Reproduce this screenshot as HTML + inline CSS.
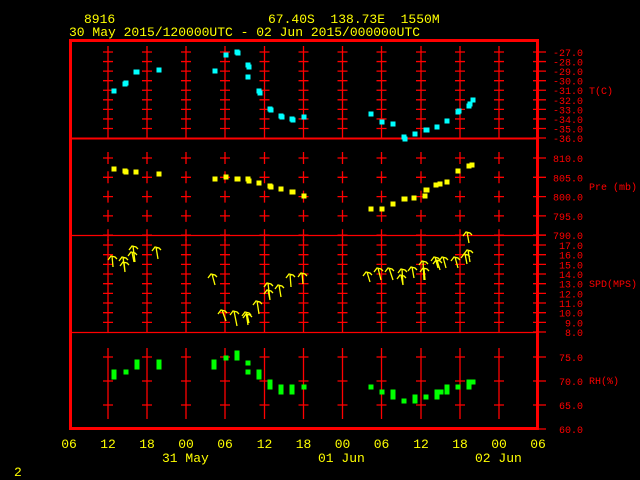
<!DOCTYPE html>
<html><head><meta charset="utf-8"><style>
html,body{margin:0;padding:0;background:#000;width:640px;height:480px;overflow:hidden}
svg{display:block}
</style></head><body>
<svg width="640" height="480" viewBox="0 0 640 480" xmlns="http://www.w3.org/2000/svg" font-family="Liberation Mono, monospace">
<rect width="640" height="480" fill="#000"/>
<!-- header -->
<g fill="#ffff00" font-size="13">
<text x="84" y="23">8916</text>
<text x="268" y="23" xml:space="preserve">67.40S  138.73E  1550M</text>
<text x="69" y="36">30 May 2015/120000UTC - 02 Jun 2015/000000UTC</text>
<text x="14" y="476">2</text>
</g>
<!-- grid -->
<g stroke="#ff0000" stroke-width="1.3" fill="none">
<line x1="71" y1="138.5" x2="538" y2="138.5" stroke-width="2"/>
<line x1="71" y1="235.5" x2="538" y2="235.5"/>
<line x1="71" y1="332.5" x2="538" y2="332.5"/>
<path id="g" d="
M108 46V138 M147 46V138 M186 46V138 M225 46V138 M264.5 46V138 M303.5 46V138 M342.5 46V138 M381.5 46V138 M421 46V138 M460 46V138 M499 46V138
M108 239V332 M147 239V332 M186 239V332 M225 239V332 M264.5 239V332 M303.5 239V332 M342.5 239V332 M381.5 239V332 M421 239V332 M460 239V332 M499 239V332
M108 348V419 M147 348V419 M186 348V419 M225 348V419 M264.5 348V419 M303.5 348V419 M342.5 348V419 M381.5 348V419 M421 348V419 M460 348V419 M499 348V419
"/>
</g>
<g id="crosses" stroke="#ff0000" stroke-width="1.3"></g>
<!-- frame -->
<rect x="70.5" y="40.5" width="467" height="388" fill="none" stroke="#ff0000" stroke-width="3"/>
<g id="rlabels" fill="#ff0000" font-size="10" text-anchor="end"></g>
<g fill="#ff0000" font-size="10">
<text x="589" y="94">T(C)</text>
<text x="589" y="190" xml:space="preserve">Pre (mb)</text>
<text x="589" y="287">SPD(MPS)</text>
<text x="589" y="384">RH(%)</text>
</g>
<!-- x labels -->
<g fill="#ffff00" font-size="13" text-anchor="middle">
<text x="69" y="448">06</text><text x="108" y="448">12</text><text x="147" y="448">18</text><text x="186" y="448">00</text>
<text x="225" y="448">06</text><text x="264.5" y="448">12</text><text x="303.5" y="448">18</text><text x="342.5" y="448">00</text>
<text x="381.5" y="448">06</text><text x="421" y="448">12</text><text x="460" y="448">18</text><text x="499" y="448">00</text><text x="538" y="448">06</text>
</g>
<g fill="#ffff00" font-size="13">
<text x="162" y="462">31 May</text><text x="318" y="462">01 Jun</text><text x="475" y="462">02 Jun</text>
</g>
<g id="data"></g>
</svg>
<script>
var NS="http://www.w3.org/2000/svg";
var xs=[108,147,186,225,264.5,303.5,342.5,381.5,421,460,499];
var cr=document.getElementById('crosses'),d="";
function ticks(ys,extraSeg){ys.forEach(function(y){xs.forEach(function(x){d+="M"+(x-5)+" "+y+"H"+(x+5);if(extraSeg)d+="M"+x+" "+(y-6)+"V"+(y+6);});d+="M533 "+y+"H546";});}
var tY=[],pY=[],sY=[],rY=[];
for(var i=0;i<10;i++)tY.push(52+i*9.56);
for(i=0;i<5;i++)pY.push(158+i*19.3);
for(i=0;i<10;i++)sY.push(245+i*9.67);
for(i=0;i<4;i++)rY.push(357+i*24);
ticks(tY.slice(0,9));ticks(pY,true);ticks(sY.slice(0,9));ticks(rY.slice(0,3));
d+="M533 138H546M533 235H546M533 332H546M533 429H546";
var p=document.createElementNS(NS,'path');p.setAttribute('d',d);p.setAttribute('fill','none');cr.appendChild(p);
// remove pressure continuous (none drawn) - pressure uses segments
var rl=document.getElementById('rlabels');
function lab(y,t){var e=document.createElementNS(NS,'text');e.setAttribute('x',583);e.setAttribute('y',y+4);e.textContent=t;rl.appendChild(e);}
for(i=0;i<10;i++)lab(tY[i],(-27-i)+".0");
for(i=0;i<5;i++)lab(pY[i],(810-5*i)+".0");
for(i=1;i<10;i++)lab(sY[i],(17-i)+".0");
lab(245,"17.0");
for(i=0;i<4;i++)lab(rY[i],(75-5*i)+".0");
var g=document.getElementById('data');
function sq(pts,c){pts.forEach(function(q){var r=document.createElementNS(NS,'rect');r.setAttribute('x',q[0]-2.5);r.setAttribute('y',q[1]-2.5);r.setAttribute('width',5);r.setAttribute('height',5);r.setAttribute('fill',c);g.appendChild(r);});}
sq([[114,91],[125,84],[126,83],[136,72],[137,72],[159,70],[215,71],[226,55],[237,52],[238,53],[248,65],[249,67],[248,77],[259,91],[260,93],[270,109],[271,110],[281,116],[282,117],[292,119],[293,120],[304,117],
[371,114],[382,122],[393,124],[404,137],[405,139],[415,134],[426,130],[427,130],[437,127],[447,121],[458,112],[459,111],[469,106],[470,104],[473,100]],"#00ffff");
sq([[114,169],[125,171],[126,172],[136,172],[159,174],[215,179],[226,177],[237,179],[238,179],[248,179],[249,181],[259,183],[270,186],[271,187],[281,189],[292,192],[293,192],[304,196],
[371,209],[382,209],[393,204],[404,199],[405,199],[414,198],[425,196],[426,190],[427,190],[436,185],[440,184],[447,182],[458,171],[469,166],[472,165]],"#ffff00");
sq([[114,372],[114,377],[126,372],[137,362],[137,367],[159,362],[159,367],[214,362],[214,367],[226,358],[237,353],[237,358],[248,363],[248,372],[259,372],[259,377],[270,382],[270,387],[281,387],[281,392],[292,387],[292,392],[304,387],
[371,387],[382,392],[393,392],[393,397],[404,401],[415,397],[415,401],[426,397],[437,392],[437,397],[441,392],[447,387],[447,392],[458,387],[469,382],[469,387],[473,382]],"#00ff00");
var ar=[[112,256,113,267],[123,257,125,272],[124,262,125,272],[133,246,135,262],[132,252,134,262],[156,247,158,259],[212,274,215,285],[222,310,226,321],[234,311,237,326],[246,312,248,325],[247,314,249,323],[257,301,259,314],[268,283,270,300],[268,290,270,300],[279,285,281,297],[290,274,291,287],[302,273,303,284],
[367,272,370,282],[378,268,381,280],[389,268,393,280],[402,269,403,285],[401,275,403,285],[412,267,414,278],[423,261,424,280],[424,268,425,280],[435,257,438,268],[437,260,440,270],[443,257,446,268],[455,257,458,268],[467,232,469,243],[468,250,470,262],[465,254,467,264]];
var ad="";ar.forEach(function(a){ad+="M"+a[2]+" "+a[3]+"L"+a[0]+" "+a[1]+"M"+(a[0]-4)+" "+(a[1]+4)+"L"+(a[0]-1)+" "+a[1]+"L"+(a[0]+3)+" "+(a[1]+1)+"L"+(a[0]+5)+" "+(a[1]+3);});
var ap=document.createElementNS(NS,'path');ap.setAttribute('d',ad);ap.setAttribute('stroke','#ffff00');ap.setAttribute('stroke-width','1.3');ap.setAttribute('fill','none');g.appendChild(ap);
</script>
</body></html>
